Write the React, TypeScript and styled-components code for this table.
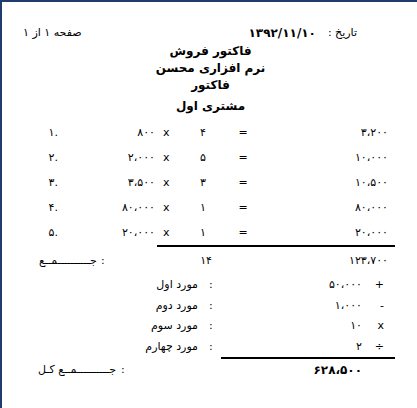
import React from "react";
import styled, { createGlobalStyle } from "styled-components";

const Global = createGlobalStyle`
  html, body { margin: 0; padding: 0; background: #fff; }
  body { font-family: "DejaVu Sans", "Noto Sans", sans-serif; color: #000; }
  * { box-sizing: border-box; }
`;

const Frame = styled.div`
  width: 417px;
  height: 408px;
  border-top: 2px solid #1f3b70;
  border-left: 2px solid #1f3b70;
  background: #fff;
  display: flex;
  flex-direction: column;
  font-size: 11px;
  line-height: 16px;
`;

const HeaderRow = styled.div`
  display: flex;
  justify-content: space-between;
  align-items: center;
  height: 16px;
  margin-top: 23px;
  padding-left: 21px;
  padding-right: 60px;
`;

const PageInfo = styled.div`
  direction: rtl;
  font-size: 11px;
`;

const DateGroup = styled.div`
  direction: rtl;
  display: flex;
  align-items: center;
  gap: 12px;
`;

const Ltr = styled.span`
  direction: ltr;
  unicode-bidi: isolate;
`;

const DateValue = styled(Ltr)`
  font-size: 12px;
  font-weight: 700;
`;

const TitleBlock = styled.div`
  display: flex;
  flex-direction: column;
  align-items: center;
  direction: rtl;
  padding-left: 2px;
  margin-top: 2px;
`;

const TitleLine = styled.div<{ $gap?: number }>`
  font-weight: 700;
  font-size: 12px;
  line-height: 17px;
  margin-top: ${(p) => p.$gap ?? 0}px;
`;

const Items = styled.div`
  display: flex;
  flex-direction: column;
  margin-top: 5px;
`;

const ItemRow = styled.div`
  display: grid;
  grid-template-columns: 56px 97px 20px 56px 24px 133px;
  height: 25px;
  align-items: center;
  direction: ltr;
`;

const Cell = styled.span<{ $align?: "left" | "right" | "center"; $pl?: number }>`
  text-align: ${(p) => p.$align ?? "left"};
  padding-left: ${(p) => p.$pl ?? 0}px;
  white-space: nowrap;
  direction: ltr;
  unicode-bidi: isolate;
`;

const Rule = styled.div<{ $left: number; $width: number }>`
  height: 2px;
  background: #000;
  margin-left: ${(p) => p.$left}px;
  width: ${(p) => p.$width}px;
`;

const SumRow = styled.div`
  display: grid;
  grid-template-columns: 37px 62px 12px 99px 176px;
  height: 20px;
  align-items: center;
  margin-top: 4px;
`;

const Label = styled.span<{ $align?: "left" | "right" }>`
  direction: rtl;
  text-align: ${(p) => p.$align ?? "left"};
  white-space: nowrap;
`;

const ModRows = styled.div`
  display: flex;
  flex-direction: column;
  margin-top: 4px;
`;

const ModRow = styled.div`
  display: grid;
  grid-template-columns: 196px 20px 144px 22px;
  height: 20.5px;
  align-items: center;
`;

const TotalRow = styled.div`
  display: grid;
  grid-template-columns: 36px 83px 12px 229px;
  height: 20px;
  align-items: center;
  margin-top: 1px;
`;

const TotalValue = styled(Cell)`
  font-weight: 700;
  font-size: 12px;
`;

const items = [
  { n: "۱.", amount: "۸۰۰", qty: "۴", total: "۳،۲۰۰" },
  { n: "۲.", amount: "۲،۰۰۰", qty: "۵", total: "۱۰،۰۰۰" },
  { n: "۳.", amount: "۳،۵۰۰", qty: "۳", total: "۱۰،۵۰۰" },
  { n: "۴.", amount: "۸۰،۰۰۰", qty: "۱", total: "۸۰،۰۰۰" },
  { n: "۵.", amount: "۲۰،۰۰۰", qty: "۱", total: "۲۰،۰۰۰" },
];

const mods = [
  { label: "مورد اول", value: "۵۰،۰۰۰", op: "+" },
  { label: "مورد دوم", value: "۱،۰۰۰", op: "-" },
  { label: "مورد سوم", value: "۱۰", op: "x" },
  { label: "مورد چهارم", value: "۲", op: "÷" },
];

const SUM = "جــــــــــمــع";

export default function App() {
  return (
    <>
      <Global />
      <Frame>
        <HeaderRow>
          <PageInfo>صفحه ۱ از ۱</PageInfo>
          <DateGroup>
            <span>تاریخ :</span>
            <DateValue>۱۳۹۲/۱۱/۱۰</DateValue>
          </DateGroup>
        </HeaderRow>
        <TitleBlock>
          <TitleLine>فاکتور فروش</TitleLine>
          <TitleLine>نرم افزاری محسن</TitleLine>
          <TitleLine>فاکتور</TitleLine>
          <TitleLine $gap={4}>مشتری اول</TitleLine>
        </TitleBlock>
        <Items>
          {items.map((it) => (
            <ItemRow key={it.n}>
              <Cell $align="right">{it.n}</Cell>
              <Cell $align="right">{it.amount}</Cell>
              <Cell $pl={8}>x</Cell>
              <Cell $align="center">{it.qty}</Cell>
              <Cell $align="center">=</Cell>
              <Cell $align="right">{it.total}</Cell>
            </ItemRow>
          ))}
        </Items>
        <Rule $left={155} $width={238} />
        <SumRow>
          <span />
          <Label>{SUM}</Label>
          <Cell>:</Cell>
          <Cell $align="right">۱۴</Cell>
          <Cell $align="right">۱۲۳،۷۰۰</Cell>
        </SumRow>
        <ModRows>
          {mods.map((m) => (
            <ModRow key={m.label}>
              <Label $align="right">{m.label}</Label>
              <Cell $pl={11}>:</Cell>
              <Cell $align="right">{m.value}</Cell>
              <Cell $align="right">{m.op}</Cell>
            </ModRow>
          ))}
        </ModRows>
        <Rule $left={219} $width={174} />
        <TotalRow>
          <span />
          <Label>{SUM} کـل</Label>
          <Cell>:</Cell>
          <TotalValue $align="right">۶۲۸،۵۰۰</TotalValue>
        </TotalRow>
      </Frame>
    </>
  );
}
